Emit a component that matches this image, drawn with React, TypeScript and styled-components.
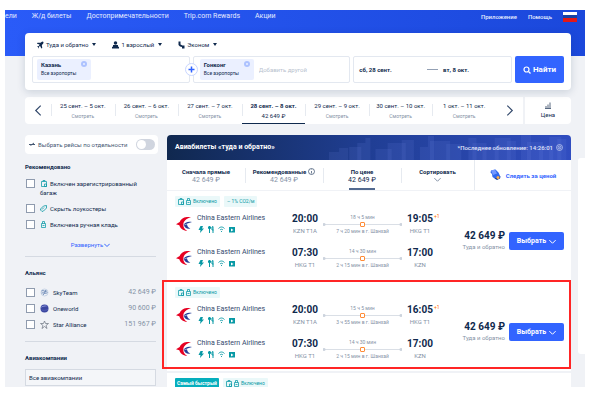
import React from "react";
import styled, { createGlobalStyle } from "styled-components";

const navy = "#0f294d";
const blue = "#3264ff";
const teal = "#0899a5";
const grey = "#8592a6";

const Global = createGlobalStyle`
  *, *::before, *::after { box-sizing: border-box; }
  body { margin: 0; background: #fff; color: ${navy}; font: 6px/9px Roboto, "Open Sans", sans-serif; }
  button, input { font: inherit; color: inherit; margin: 0; }
  button { padding: 0; border: 0; background: none; white-space: nowrap; }
  h2, h3, p { margin: 0; padding: 0; font-size: inherit; }
  a { color: inherit; text-decoration: none; }
  svg { display: block; flex: none; }
`;

const Page = styled.div`
  margin: 10px 5px 0;
  height: calc(100vh - 25px);
  overflow: hidden;
  background: #f0f2f6;
`;
const Top = styled.header`
  height: 46px;
  background: linear-gradient(90deg, #2a5bf8, #1b48db);
  color: #e4ebff;
`;
const Nav = styled.nav`
  display: flex;
  align-items: center;
  gap: 15px;
  height: 13px;
  padding-right: 8px;
  white-space: nowrap;
`;
const NavLink = styled.a<{ $minor?: boolean }>`
  font-size: ${(p) => (p.$minor ? 6 : 7)}px;
  font-weight: ${(p) => (p.$minor ? 500 : 400)};
`;
const Side = styled.div`
  display: flex;
  align-items: center;
  gap: 11px;
  margin-left: auto;
`;

const SearchCard = styled.form`
  position: relative;
  margin: -23px 14px 0 20px;
  padding: 6px 7px 8px;
  background: #fff;
  border-radius: 4px;
  box-shadow: 0 2px 8px #0f294d2a;
`;
const Options = styled.div`
  display: flex;
  gap: 16px;
  height: 17px;
  padding: 0 5px;
  align-items: flex-start;
`;
const Option = styled.button`
  display: flex;
  align-items: center;
  gap: 2px;
  height: 11px;
`;
const Caret = styled.i`
  border: 2px solid transparent;
  border-top: 3px solid ${navy};
  border-bottom: 0;
  margin-left: 2px;
`;
const Fields = styled.div`
  display: grid;
  grid-template-columns: 157fr 157fr 158fr 49px;
  gap: 3px;
  height: 26px;
`;
const Field = styled.div<{ $dates?: boolean; $end?: boolean }>`
  position: relative;
  display: flex;
  align-items: center;
  gap: 5px;
  border: 1px solid #e3e8f0;
  border-radius: 2px;
  padding: ${(p) => (p.$dates ? "0 42px 0 5px" : p.$end ? "2px 2px 2px 6px" : "2px 4px")};
  font-weight: ${(p) => (p.$dates ? 700 : 400)};
  white-space: nowrap;
`;
const Place = styled.div`
  display: flex;
  justify-content: space-between;
  width: 54px;
  height: 21px;
  padding: 2px 4px;
  background: #ebf0ff;
  border-radius: 2px;
  line-height: 8px;
  white-space: nowrap;
  p { width: 38px; font-size: 5px; }
  strong { display: block; font-size: 6px; }
`;
const Swap = styled.button`
  position: absolute;
  left: -9px;
  top: 6px;
  width: 13px;
  height: 13px;
  display: grid;
  place-items: center;
  background: #fff;
  border: 1px solid #c9d6ff;
  border-radius: 50%;
`;
const AddInput = styled.input`
  min-width: 0;
  flex: 1;
  border: 0;
  padding: 0;
  background: none;
  &::placeholder { color: #b8c1ce; opacity: 1; }
`;
const Dash = styled.span`
  width: 11px;
  height: 1px;
  margin-left: auto;
  background: #93a0b4;
`;
const SearchButton = styled.button`
  display: flex;
  align-items: center;
  justify-content: center;
  gap: 2px;
  border-radius: 2px;
  background: ${blue};
  color: #fff;
  font-size: 8px;
  font-weight: 700;
`;

const Strip = styled.div`
  display: grid;
  grid-template-columns: 26px repeat(7, 1fr) 27px 48px;
  height: 27px;
  margin: 7px 14px 0 20px;
  background: #fff;
  border-radius: 4px;
  overflow: hidden;
`;
const Arrow = styled.button`
  display: grid;
  place-items: center;
  color: #33496c;
`;
const Day = styled.button<{ $active?: boolean }>`
  min-width: 0;
  line-height: 10px;
  padding-top: 1px;
  background: linear-gradient(#e6eaf0, #e6eaf0) left center / 1px 12px no-repeat;
  border-bottom: 1px solid ${(p) => (p.$active ? navy : "transparent")};
  font-weight: ${(p) => (p.$active ? 700 : 400)};
  small { display: block; font-size: ${(p) => (p.$active ? 6 : 5)}px; font-weight: 400; color: ${(p) => (p.$active ? navy : grey)}; }
`;
const PriceButton = styled.button`
  display: flex;
  flex-direction: column;
  align-items: center;
  justify-content: center;
  gap: 1px;
  border-left: 2px solid #f0f2f6;
`;

const Columns = styled.div`
  display: grid;
  grid-template-columns: 133px minmax(0, 1fr) 7px;
  align-items: start;
  margin: 11px 0 0 20px;
`;
const Filters = styled.aside`
  min-width: 0;
`;
const Separate = styled.label`
  display: flex;
  align-items: center;
  gap: 3px;
  height: 19px;
  padding: 0 3px 0 4px;
  background: #fff;
  border-radius: 4px;
  color: #455873;
  white-space: nowrap;
`;
const Toggle = styled.input`
  appearance: none;
  flex: none;
  width: 19px;
  height: 11px;
  && { margin-left: auto; }
  border-radius: 6px;
  background: #d0d5df;
  &::before { content: ""; display: block; width: 9px; height: 9px; margin: 1px; border-radius: 50%; background: #fff; }
`;
const Group = styled.section<{ $pad: number; $gap: number }>`
  width: 131px;
  padding-top: ${(p) => p.$pad}px;
  & > h3 { line-height: 9px; margin-bottom: ${(p) => p.$gap}px; }
`;
const Rule = styled.hr<{ $spaced?: boolean }>`
  margin: ${(p) => (p.$spaced ? 6 : 0)}px 0 0;
  border: 0;
  border-top: 1px solid #d5dae2;
`;
const Check = styled.label<{ $tall?: boolean }>`
  display: flex;
  align-items: flex-start;
  gap: 5px;
  height: ${(p) => (p.$tall ? 25 : 16)}px;
  padding: 1px ${(p) => (p.$tall ? 14 : 0)}px 0 0;
  line-height: 9px;
`;
const Box = styled.input`
  appearance: none;
  flex: none;
  width: 9px;
  height: 9px;
  && { margin-left: 1px; }
  background: #fff;
  border: 1px solid #8f9bae;
`;
const CheckText = styled.span`
  flex: 1;
`;
const Mark = styled.span<{ $logo?: boolean }>`
  display: inline-flex;
  justify-content: center;
  vertical-align: top;
  align-items: center;
  width: ${(p) => (p.$logo ? 9 : 7)}px;
  height: 9px;
  margin-right: ${(p) => (p.$logo ? 4 : 3)}px;
`;
const Cost = styled.span`
  color: ${grey};
  font-size: 7px;
`;
const More = styled.button`
  display: flex;
  align-items: center;
  gap: 1px;
  margin: 5px auto 7px;
  color: ${blue};
`;
const AirlineInput = styled.input`
  display: block;
  width: 100%;
  height: 17px;
  padding: 0 3px;
  background: #f4f6f9;
  border: 1px solid #d5dae2;
  &::placeholder { color: ${navy}; opacity: 1; }
`;

const Results = styled.main`
  min-width: 0;
  margin: 0 7px 0 9px;
`;
const Banner = styled.div`
  position: relative;
  display: flex;
  align-items: center;
  justify-content: space-between;
  height: 25px;
  padding: 0 8px;
  border-radius: 4px 4px 0 0;
  overflow: hidden;
  background: linear-gradient(90deg, #10284f, #203e94 50%, #304dc0);
  color: #fff;
  white-space: nowrap;
  h2, p { position: relative; display: flex; align-items: center; gap: 3px; }
  h2 { font-size: 7px; }
  p { color: #e1e7fb; font-weight: 500; }
`;
const Skyline = styled.svg`
  position: absolute;
  right: 0;
  top: 0;
  width: 60%;
  height: 100%;
`;
const Tabs = styled.div`
  display: grid;
  grid-template-columns: 78fr 78fr 78fr 73fr 97fr;
  height: 30px;
  background: #fff;
  white-space: nowrap;
`;
const Tab = styled.button<{ $first?: boolean; $active?: boolean }>`
  display: flex;
  flex-direction: column;
  align-items: center;
  padding-top: 7px;
  line-height: 9px;
  background: linear-gradient(#e6eaf0, #e6eaf0) left center / ${(p) => (p.$first ? 0 : 1)}px 15px no-repeat;
  strong { display: flex; align-items: center; gap: 2px; height: 9px; }
  span { font-size: 7px; color: ${(p) => (p.$active ? navy : grey)}; }
  &::after { content: ""; width: 26px; height: 2px; margin-top: auto; background: ${(p) => (p.$active ? "#52698f" : "transparent")}; }
`;
const Follow = styled.button`
  display: flex;
  align-items: center;
  justify-content: center;
  gap: 5px;
  border-left: 1px solid #e6eaf0;
  color: ${blue};
  font-weight: 700;
`;
const Offer = styled.article`
  position: relative;
  height: 89px;
  margin-top: 2px;
  padding: 5px 7px 0 8px;
  background: #fff;
  &:first-of-type { margin-top: 1px; }
`;
const Highlight = styled.div`
  position: absolute;
  inset: -2px 0 2px -5px;
  border: 2px solid #ff2525;
  pointer-events: none;
`;
const Badges = styled.div`
  display: flex;
  gap: 4px;
  height: 11px;
`;
const Badge = styled.span<{ $solid?: boolean }>`
  display: flex;
  align-items: center;
  gap: 2px;
  padding: 0 ${(p) => (p.$solid ? 2 : 3)}px;
  border-radius: 1px;
  font-size: 5px;
  background: ${(p) => (p.$solid ? "#06aebd" : "#eaf8f9")};
  color: ${(p) => (p.$solid ? "#fff" : teal)};
  font-weight: ${(p) => (p.$solid ? 700 : 400)};
`;
const OfferBody = styled.div`
  display: grid;
  grid-template-columns: 263px minmax(0, 1fr) 55px;
  align-items: center;
  column-gap: 4px;
  padding-top: 3px;
`;
const Leg = styled.div`
  display: grid;
  grid-template-columns: 22px 90px 36px 79px 36px;
  height: 34px;
  align-items: start;
  padding-top: 3px;
  white-space: nowrap;
  & > svg { margin: 4px 0 0 1px; }
`;
const Carrier = styled.div`
  padding-top: 1px;
  font-size: 7px;
  line-height: 9px;
  color: #33496c;
`;
const Perks = styled.div`
  display: flex;
  gap: 4px;
  margin: 3px 0 0 1px;
`;
const Stop = styled.div`
  position: relative;
  text-align: center;
  color: ${grey};
  line-height: 11px;
  strong { display: block; font-size: 10px; line-height: 12px; color: ${navy}; }
  sup { position: absolute; left: 32px; top: 0; font-size: 5px; line-height: 7px; color: #ff6f00; }
`;
const Path = styled.div`
  display: flex;
  flex-direction: column;
  align-items: center;
  padding-top: 1px;
  font-size: 5px;
  line-height: 7px;
  color: ${grey};
`;
const Track = styled.div`
  display: flex;
  align-items: center;
  justify-content: center;
  width: 100%;
  height: 5px;
  margin: 1px 0;
  background: radial-gradient(circle at 1px, #ccd3dd 1px, transparent 2px), radial-gradient(circle at calc(100% - 1px), #ccd3dd 1px, transparent 2px), linear-gradient(#dadfe6, #dadfe6) center / 100% 1px no-repeat;
  i { width: 5px; height: 5px; border: 1px solid #ff8c37; border-radius: 1px; background: #fff; }
`;
const Total = styled.div`
  margin-bottom: 6px;
  text-align: right;
  white-space: nowrap;
  color: ${grey};
  line-height: 11px;
  strong { display: block; font-size: 10px; color: ${navy}; }
`;
const Choose = styled.button`
  display: flex;
  align-items: center;
  justify-content: center;
  gap: 3px;
  height: 18px;
  && { margin-bottom: 6px; }
  border-radius: 2px;
  background: ${blue};
  color: #fff;
  font-size: 7px;
  font-weight: 700;
`;
const Float = styled.div`
  height: 196px;
  margin-top: 23px;
  background: #fff;
  border-radius: 3px 0 0 3px;
`;

const Chevron = ({ turn = 0, size = 6, w = 1.2 }: { turn?: number; size?: number; w?: number }) => (
  <svg width={size} height={size} viewBox="0 0 10 10" fill="none" stroke="currentColor" strokeWidth={(w * 10) / size}>
    <path d="M0.5 3 5 7.5 9.5 3" transform={`rotate(${turn} 5 5)`} />
  </svg>
);
const PlaneIcon = () => (
  <svg width="7" height="8" viewBox="0 0 16 16" fill="currentColor">
    <path d="M1 3h7l4-3 3 1-1 4-3 3 1 7-2 1-3-6-3 2v3l-1 1-1-4-2-2h4l2-3-6-2z" />
  </svg>
);
const PersonIcon = () => (
  <svg width="7" height="8" viewBox="0 0 14 16" fill="currentColor">
    <circle cx="7" cy="4" r="3.5" />
    <path d="M2 8h10v3l2 1v3H0v-3l2-1z" />
  </svg>
);
const SeatIcon = () => (
  <svg width="7" height="8" viewBox="0 0 14 16" fill="currentColor">
    <path d="M1 1h4v6l4 2h4v6H8v-3L4 11 1 8z" />
  </svg>
);
const PlusIcon = () => (
  <svg width="7" height="7" viewBox="0 0 14 14" fill="none" stroke={blue} strokeWidth="3">
    <path d="M7 1v12M1 7h12" />
  </svg>
);
const ClearIcon = () => (
  <svg width="6" height="6" viewBox="0 0 12 12">
    <circle cx="6" cy="6" r="6" fill="#adc2ff" />
    <path d="m4 4 4 4m0-4L4 8" stroke="#ebf0ff" strokeWidth="1.5" />
  </svg>
);
const SearchIcon = () => (
  <svg width="8" height="8" viewBox="0 0 16 16" fill="none" stroke="currentColor" strokeWidth="2.4">
    <circle cx="7" cy="7" r="5" />
    <path d="m11 11 4 4" />
  </svg>
);
const BarsIcon = () => (
  <svg width="6" height="7" viewBox="0 0 12 14" fill="none" stroke="#455873" strokeWidth="1.8">
    <path d="M2 12V8m4 4V5m4 7V1M0 13h12" />
  </svg>
);
const Flag = () => (
  <svg width="14" height="10" viewBox="0 0 14 10">
    <path fill="#fff" d="M0 0h14v4H0z" />
    <path fill="#1742a5" d="M0 3h14v4H0z" />
    <path fill="#e31818" d="M0 6h14v4H0z" />
  </svg>
);
const RouteIcon = () => (
  <svg width="6" height="5" viewBox="0 0 12 10" fill="none" stroke="currentColor" strokeWidth="2">
    <path d="M0 5h6l4-3M3 7l3-2h6" />
  </svg>
);
const BagIcon = ({ small = false }: { small?: boolean }) => (
  <svg width={small ? 5 : 6} height="7" viewBox={small ? "0 0 10 14" : "0 0 12 14"} fill="none" stroke={teal} strokeWidth="1.5">
    {small ? <path d="M1 5h8v8H1zM3 5V1h4v4M3 9h4" /> : <path d="M1 3h10v10H1zM4 3V1h4v2M7 8h4v5H7z" />}
  </svg>
);
const TagIcon = () => (
  <svg width="7" height="7" viewBox="0 0 14 14" fill="none" stroke={teal} strokeWidth="1.6">
    <path d="M1 8 7 2l6-1v5l-6 6-3 1-3-3z" />
    <path d="m4 9 4-4" />
  </svg>
);
const SkyTeamLogo = () => (
  <svg width="9" height="9" viewBox="0 0 18 18" fill="none" stroke="#7890b5" strokeWidth="1.5">
    <circle cx="9" cy="9" r="7" stroke="#b8c8dd" />
    <path d="M3 6c5-3 5 3 11 0M3 10c5-2 8 3 12-1M6 14c3-4 4-4 5-10" stroke="#4f72a8" />
  </svg>
);
const OneworldLogo = () => (
  <svg width="9" height="9" viewBox="0 0 18 18">
    <circle cx="9" cy="9" r="8" fill="#3b46a0" />
    <path d="M1 8C5 2 12 2 16 5 10 4 5 6 1 8z" fill="#8f9bde" />
    <path d="M3 12c4 1 9 1 13-1" stroke="#6b76c6" fill="none" />
  </svg>
);
const StarLogo = () => (
  <svg width="9" height="9" viewBox="0 0 18 18" fill="none" stroke="#777f8c" strokeWidth="1.6">
    <path d="m9 2 2 5h6l-5 4 2 6-5-4-5 4 2-6-5-4h6z" />
  </svg>
);
const EasternLogo = () => (
  <svg width="16" height="14" viewBox="0 0 48 42">
    <path fill="#e60022" d="M45 0C28-2 14 4 11 15L0 22l10 3c2 9 10 16 24 17-8-5-12-11-12-19C22 13 30 5 45 0z" />
    <path fill="#263f98" d="M48 15c-12-3-22 1-26 10 8-5 16-7 26-10z" />
    <path fill="#263f98" d="M24 24c2 9 9 13 19 11-6-3-9-6-10-13z" />
  </svg>
);
const PerkIcons = () => (
  <Perks>
    <svg width="6" height="7" viewBox="0 0 12 14" fill={teal}><path d="M5 0h5L8 5h4L4 14l1-6H1z" /></svg>
    <svg width="6" height="7" viewBox="0 0 12 14" fill="none" stroke={teal} strokeWidth="2"><path d="M1 1v4h4V1M3 0v14M10 14V1L8 2v6h3" /></svg>
    <svg width="7" height="7" viewBox="0 0 14 14" fill="none" stroke={teal} strokeWidth="1.8"><path d="M1 5c4-4 8-4 12 0M4 8c2-2 4-2 6 0M6 11h2" /></svg>
    <svg width="6" height="7" viewBox="0 0 12 14"><path fill={teal} d="M0 2h12v11H0z" /><path fill="#fff" d="m4 5 5 3-5 3z" /></svg>
  </Perks>
);
const InfoIcon = ({ clock = false }: { clock?: boolean }) => (
  <svg width="7" height="7" viewBox="0 0 14 14" fill="none" stroke="currentColor" strokeWidth="1.2">
    <circle cx="7" cy="7" r="6" />
    {clock ? <><circle cx="7" cy="7" r="3" /><path d="m6 7 2 1" /></> : <path d="M7 6v5M7 3v1" />}
  </svg>
);
const BellIcon = () => (
  <svg width="11" height="12" viewBox="0 0 22 24">
    <path fill="#3169ed" d="m2 3 9-2 6 6 4 9-10 4-6-4-1-6-3-3z" />
    <path fill="#7399ff" d="m2 3 8-2 4 8-8 3z" />
    <path fill="#153b91" d="m9 19 12-4-1 4-6 3z" />
    <circle cx="16" cy="17" r="3" fill="#ffad45" />
  </svg>
);

const days = [
  ["25 сент. – 5 окт.", "Смотреть"],
  ["26 сент. – 6 окт.", "Смотреть"],
  ["27 сент. – 7 окт.", "Смотреть"],
  ["28 сент. – 8 окт.", "42 649 ₽"],
  ["29 сент. – 9 окт.", "Смотреть"],
  ["30 сент. – 10 окт.", "Смотреть"],
  ["1 окт. – 11 окт.", "Смотреть"],
];
type LegData = { from: string; dep: string; to: string; arr: string; plus?: boolean; time: string; via: string };
const offers: { co2?: boolean; marked?: boolean; legs: LegData[] }[] = [
  {
    co2: true,
    legs: [
      { dep: "20:00", from: "KZN T1A", arr: "19:05", to: "HKG T1", plus: true, time: "18 ч 5 мин", via: "7 ч 20 мин в г. Шанхай" },
      { dep: "07:30", from: "HKG T1", arr: "17:00", to: "KZN", time: "14 ч 30 мин", via: "2 ч 15 мин в г. Шанхай" },
    ],
  },
  {
    marked: true,
    legs: [
      { dep: "20:00", from: "KZN T1A", arr: "16:05", to: "HKG T1", plus: true, time: "15 ч 5 мин", via: "3 ч 55 мин в г. Шанхай" },
      { dep: "07:30", from: "HKG T1", arr: "17:00", to: "KZN", time: "14 ч 30 мин", via: "2 ч 15 мин в г. Шанхай" },
    ],
  },
];

const City = ({ name }: { name: string }) => (
  <Place>
    <p><strong>{name}</strong>Все аэропорты</p>
    <ClearIcon />
  </Place>
);
const Included = () => <Badge><BagIcon /><BagIcon small />Включено</Badge>;

export default function App() {
  return (
    <>
      <Global />
      <Page>
        <Top>
          <Nav>
            <NavLink href="#hotels">ели</NavLink>
            <NavLink href="#trains">Ж/д билеты</NavLink>
            <NavLink href="#sights">Достопримечательности</NavLink>
            <NavLink href="#rewards">Trip.com Rewards</NavLink>
            <NavLink href="#deals">Акции</NavLink>
            <Side>
              <NavLink $minor href="#app">Приложение</NavLink>
              <NavLink $minor href="#help">Помощь</NavLink>
              <Flag />
            </Side>
          </Nav>
        </Top>
        <SearchCard onSubmit={(e) => e.preventDefault()}>
          <Options>
            <Option type="button"><PlaneIcon />Туда и обратно<Caret /></Option>
            <Option type="button"><PersonIcon />1 взрослый<Caret /></Option>
            <Option type="button"><SeatIcon />Эконом<Caret /></Option>
          </Options>
          <Fields>
            <Field><City name="Казань" /></Field>
            <Field $end>
              <Swap type="button" aria-label="Добавить"><PlusIcon /></Swap>
              <City name="Гонконг" />
              <AddInput aria-label="Добавить другой" placeholder="Добавить другой" />
            </Field>
            <Field $dates><span>сб, 28 сент.</span><Dash /><span>вт, 8 окт.</span></Field>
            <SearchButton><SearchIcon />Найти</SearchButton>
          </Fields>
        </SearchCard>
        <Strip>
          <Arrow aria-label="Назад"><Chevron turn={90} size={11} /></Arrow>
          {days.map(([d, s], i) => (
            <Day key={d} $active={i === 3}>{d}<small>{s}</small></Day>
          ))}
          <Arrow aria-label="Вперёд"><Chevron turn={-90} size={11} /></Arrow>
          <PriceButton><BarsIcon />Цена</PriceButton>
        </Strip>
        <Columns>
          <Filters>
            <Separate><RouteIcon />Выбрать рейсы по отдельности<Toggle type="checkbox" /></Separate>
            <Group $pad={8} $gap={7}>
              <h3>Рекомендовано</h3>
              <Check $tall><Box type="checkbox" /><CheckText><Mark><BagIcon /></Mark>Включен зарегистрированный багаж</CheckText></Check>
              <Check><Box type="checkbox" /><CheckText><Mark><TagIcon /></Mark>Скрыть лоукостеры</CheckText></Check>
              <Check><Box type="checkbox" /><CheckText><Mark><BagIcon small /></Mark>Включена ручная кладь</CheckText></Check>
              <More>Развернуть<Chevron size={6} w={1} /></More>
              <Rule />
            </Group>
            <Group $pad={11} $gap={10}>
              <h3>Альянс</h3>
              <Check><Box type="checkbox" /><CheckText><Mark $logo><SkyTeamLogo /></Mark>SkyTeam</CheckText><Cost>42 649 ₽</Cost></Check>
              <Check><Box type="checkbox" /><CheckText><Mark $logo><OneworldLogo /></Mark>Oneworld</CheckText><Cost>90 600 ₽</Cost></Check>
              <Check><Box type="checkbox" /><CheckText><Mark $logo><StarLogo /></Mark>Star Alliance</CheckText><Cost>151 967 ₽</Cost></Check>
              <Rule $spaced />
            </Group>
            <Group $pad={11} $gap={7}>
              <h3>Авиакомпании</h3>
              <AirlineInput aria-label="Авиакомпании" placeholder="Все авиакомпании" />
            </Group>
          </Filters>
          <Results>
            <Banner>
              <Skyline viewBox="0 0 240 25" preserveAspectRatio="none" fill="#7189e8" fillOpacity="0.13">
                <path d="M0 25V17h10v-4h9v12zM28 25V8h8V3h5v22zM46 25V14h16v11zM72 25V5h12v20zM90 25V12h8V1h6v24zM116 25V9h15v16zM138 25V3h8v22zM152 25V12h16v13zM176 25V6h9v19zM190 25V0h10v25zM208 25V10h14v15zM226 25V4h9v21z" />
                <path d="M20 25V12h12v13zM58 25V8h18v17zM100 25V6h20v19zM142 25V8h14v17zM164 25V3h16v22zM196 25V7h16v18zM218 25V2h12v23z" />
              </Skyline>
              <h2>Авиабилеты «туда и обратно»</h2>
              <p>*Последнее обновление: 14:26:01 <InfoIcon clock /></p>
            </Banner>
            <Tabs>
              <Tab $first><strong>Сначала прямые</strong><span>42 649 ₽</span></Tab>
              <Tab><strong>Рекомендованные <InfoIcon /></strong><span>42 649 ₽</span></Tab>
              <Tab $active><strong>По цене</strong><span>42 649 ₽</span></Tab>
              <Tab><strong>Сортировать</strong><span><Chevron size={7} w={1} /></span></Tab>
              <Follow><BellIcon />Следить за ценой</Follow>
            </Tabs>
            {offers.map((o, i) => (
              <Offer key={i}>
                <Badges><Included />{o.co2 && <Badge>– 1% CO2/м</Badge>}</Badges>
                <OfferBody>
                  <div>
                    {o.legs.map((l) => (
                      <Leg key={l.dep}>
                        <EasternLogo />
                        <Carrier>China Eastern Airlines<PerkIcons /></Carrier>
                        <Stop><strong>{l.dep}</strong>{l.from}</Stop>
                        <Path>{l.time}<Track><i /></Track>{l.via}</Path>
                        <Stop><strong>{l.arr}</strong>{l.plus && <sup>+1</sup>}{l.to}</Stop>
                      </Leg>
                    ))}
                  </div>
                  <Total><strong>42 649 ₽</strong>Туда и обратно</Total>
                  <Choose>Выбрать <Chevron size={7} w={1} /></Choose>
                </OfferBody>
                {o.marked && <Highlight />}
              </Offer>
            ))}
            <Offer><Badges><Badge $solid>Самый быстрый</Badge><Included /></Badges></Offer>
          </Results>
          <Float />
        </Columns>
      </Page>
    </>
  );
}
